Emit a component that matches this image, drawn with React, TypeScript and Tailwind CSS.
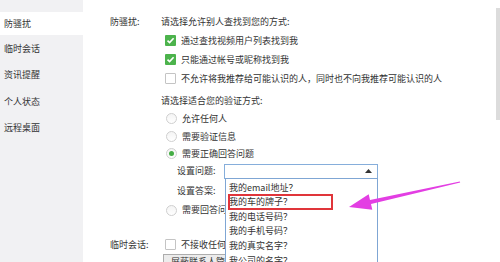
import React from "react";

const font = { fontFamily: '"Noto Sans CJK SC", "Noto Sans", sans-serif' };

const menu = ["防骚扰", "临时会话", "资讯提醒", "个人状态", "远程桌面"];

const questions = [
  "我的email地址？",
  "我的车的牌子？",
  "我的电话号码？",
  "我的手机号码？",
  "我的真实名字？",
  "我公司的名字？",
];

function Checkbox({ checked }: { checked?: boolean }) {
  if (checked) {
    return (
      <span className="flex h-[11px] w-[11px] items-center justify-center rounded-[1px] bg-[#4cb34c]">
        <svg width="9" height="9" viewBox="0 0 9 9">
          <path d="M1.5 4.6 L3.6 6.6 L7.6 2.2" fill="none" stroke="#fff" strokeWidth="1.6" />
        </svg>
      </span>
    );
  }
  return <span className="h-[11px] w-[11px] rounded-[1px] border border-[#c4c4c4] bg-white" />;
}

function Radio({ checked }: { checked?: boolean }) {
  return (
    <span className="flex h-[11px] w-[11px] items-center justify-center rounded-full border border-[#cfcfcf] bg-gradient-to-b from-[#f4f4f4] to-white">
      {checked && <span className="h-[5px] w-[5px] rounded-full bg-[#45ad45]" />}
    </span>
  );
}

export default function App() {
  return (
    <div className="relative flex h-[262px] w-[500px] overflow-hidden bg-white text-[9px] text-[#333]" style={font}>
      <aside className="flex w-[83px] shrink-0 flex-col bg-[#f1f1f3] pt-[12px]">
        {menu.map((m, i) => (
          <div
            key={m}
            className={`flex items-center pl-[4px] ${i === 0 ? "h-[23px] bg-white" : "h-[26.5px]"}`}
          >
            {m}
          </div>
        ))}
      </aside>

      <main className="flex flex-1 flex-col pl-[27px] pt-[13px]">
        <div className="flex">
          <div className="flex h-[18px] w-[51px] shrink-0 items-center">防骚扰:</div>
          <div className="flex flex-col">
            <div className="flex h-[18px] items-center">请选择允许别人查找到您的方式:</div>
            <div className="flex h-[19px] items-center gap-[5px] pl-[4px]">
              <Checkbox checked />
              通过查找视频用户列表找到我
            </div>
            <div className="flex h-[19px] items-center gap-[5px] pl-[4px]">
              <Checkbox checked />
              只能通过帐号或昵称找到我
            </div>
            <div className="flex h-[19px] items-center gap-[5px] pl-[4px] whitespace-nowrap">
              <Checkbox />
              不允许将我推荐给可能认识的人，同时也不向我推荐可能认识的人
            </div>
            <div className="mt-[4px] flex h-[18px] items-center">请选择适合您的验证方式:</div>
            <div className="flex h-[17.5px] items-center gap-[5px] pl-[5px]">
              <Radio />
              允许任何人
            </div>
            <div className="flex h-[17.5px] items-center gap-[5px] pl-[5px]">
              <Radio />
              需要验证信息
            </div>
            <div className="flex h-[17.5px] items-center gap-[5px] pl-[5px]">
              <Radio checked />
              需要正确回答问题
            </div>
            <div className="flex h-[17px] items-center pl-[16px]">
              <span className="w-[47px]">设置问题:</span>
              <div className="relative flex h-[15px] w-[154px] items-center justify-end border border-[#86aedb] bg-white pr-[5px]">
                <svg width="7" height="4" viewBox="0 0 7 4">
                  <path d="M0 4 L3.5 0 L7 4 Z" fill="#333" />
                </svg>
              </div>
            </div>
            <div className="flex h-[22px] items-center pl-[16px]">设置答案:</div>
            <div className="flex h-[17px] items-center gap-[5px] pl-[5px]">
              <Radio />
              需要回答问题并由我确认
            </div>
          </div>
        </div>

        <div className="mt-[17px] flex">
          <div className="flex h-[18px] w-[51px] shrink-0 items-center">临时会话:</div>
          <div className="flex flex-col">
            <div className="flex h-[18px] items-center gap-[5px] pl-[4px]">
              <Checkbox />
              不接收任何临时会话消息
            </div>
            <div className="ml-[2px] flex h-[16px] items-center border border-[#adadad] bg-[#ececec] px-[7px]">
              屏蔽联系人管理
            </div>
          </div>
        </div>
      </main>

      <div className="absolute left-[225px] top-[178px] h-[100px] w-[153px] border border-[#7fa6d4] bg-white pl-[3px] pt-[1px]">
        {questions.map((q, i) => (
          <div key={q} className="relative flex h-[14.6px] items-center">
            {q}
            {i === 1 && (
              <span className="absolute left-[-1px] top-[-1px] h-[16px] w-[105px] border-2 border-[#e0353a]" />
            )}
          </div>
        ))}
      </div>

      <div className="absolute right-0 top-[8px] h-[112px] w-[4px] bg-[#dcdcdc]" />

      <svg className="absolute left-0 top-0" width="500" height="262" viewBox="0 0 500 262">
        <polygon
          points="460.2,182.6 371.0,204.0 372.3,209.8 349,207 368.7,194.2 370.0,200.0 459.8,181.4"
          fill="#e33ee3"
        />
      </svg>
    </div>
  );
}
